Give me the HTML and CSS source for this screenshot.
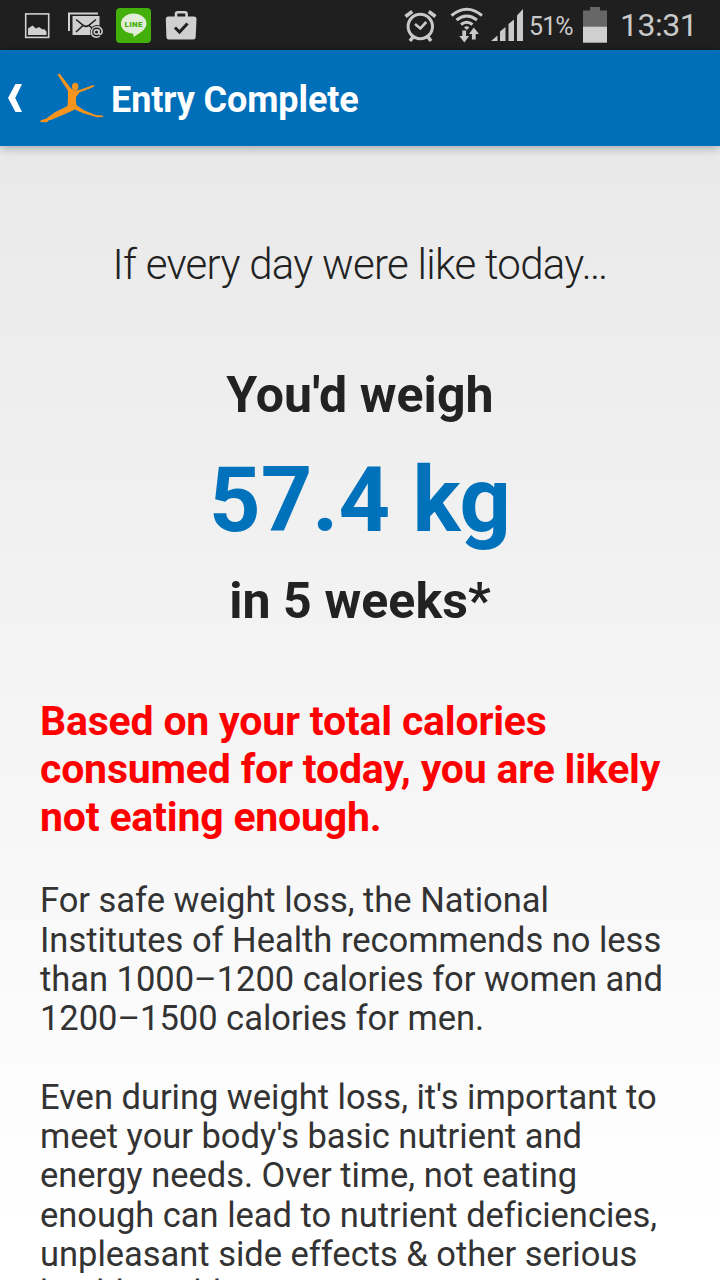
FILE: index.html
```html
<!DOCTYPE html>
<html lang="en">
<head>
  <meta charset="UTF-8" />
  <meta name="viewport" content="width=device-width, initial-scale=1.0"/>
  <title>Entry Complete</title>
  <link rel="stylesheet" href="styles.css">
</head>
<body>
  <div class="status-bar">
    <svg class="status-icons" width="220" height="50" viewBox="0 0 220 50">
      <!-- picture -->
      <rect x="25.700" y="13.900" width="23" height="23.500" fill="none" stroke="#d0d0d0" stroke-width="1.600"/>
      <path d="M28 35V28.500l4.500-3 3.500 3 3-1.500 3.500 2.500 1.500-.5 2.500 2.500V35z" fill="#d0d0d0"/>
      <!-- mail -->
      <path d="M69 31V13.500H98" fill="none" stroke="#d0d0d0" stroke-width="2"/>
      <path d="M72.500 16H99.500V26L91 28V35H72.500z" fill="#d0d0d0"/>
      <path d="M76 19.500l7.500 6q2.500 1.800 5 0l7.500-6M76 32l7-6.500M89 25.500l3 2.500" fill="none" stroke="#1f1f1f" stroke-width="1.600"/>
      <circle cx="97" cy="32" r="7" fill="#1f1f1f"/>
      <circle cx="96.500" cy="32" r="2.300" fill="none" stroke="#d0d0d0" stroke-width="1.500"/>
      <path d="M99 29.500v3.500c0 2 3.200 1.500 3.200-1.200 0-7-10.800-6.500-10.800.4 0 5 5 6 8.500 4" fill="none" stroke="#d0d0d0" stroke-width="1.500"/>
      <!-- chat -->
      <rect x="116" y="8" width="35" height="35" rx="4" fill="#43af0b"/>
      <path d="M133.500 13.500c7.200 0 13 4.300 13 10.200 0 5-5.500 9-13.300 13.300.5-2 .5-3.200-.7-3.500-6.800-.5-11.500-4.500-11.500-9.800 0-5.900 5.500-10.200 12.500-10.200z" fill="#e1ecd9"/>
      <text class="chat-label" x="124.500" y="27" textLength="18">LINE</text>
      <!-- briefcase -->
      <path d="M176 17v-3q0-1.800 1.800-1.800h7q1.800 0 1.800 1.800v3" fill="none" stroke="#d0d0d0" stroke-width="2.600"/>
      <path d="M168 16.500h26q2.500 0 2.500 2.500l-.8 18q-.1 2.500-2.500 2.500h-24.400q-2.300 0-2.400-2.500L165.800 19q0-2.500 2.200-2.500z" fill="#d0d0d0"/>
      <path d="M175 27.500l4.500 4.500 8-8.500" fill="none" stroke="#1f1f1f" stroke-width="3"/>
    </svg>
    <div class="status-right">
      <svg class="signal-icons" width="126" height="50" viewBox="400 0 126 50">
        <!-- alarm -->
        <circle cx="420.300" cy="26.500" r="12.200" fill="none" stroke="#c9c9c9" stroke-width="3"/>
        <path d="M405.500 16.500l6.800-5M435.500 16.500l-6.800-5M413 37l-3 4M428 37l3 4" fill="none" stroke="#c9c9c9" stroke-width="3.600"/>
        <path d="M415 24l5.300 4.500 6-6.500" fill="none" stroke="#c9c9c9" stroke-width="2.600"/>
        <!-- wifi -->
        <g fill="none" stroke="#c9c9c9" stroke-width="3">
          <path d="M451.500 15.500q15.300-12.500 30.500 0"/>
          <path d="M456.500 20q10.300-8 20.500 0"/>
          <path d="M461 24.500q5.800-4.500 11.500 0"/>
        </g>
        <path d="M464 27.300q2.700-2.200 5.400 0l-2.700 2.600z" fill="#c9c9c9"/>
        <path d="M462.300 30.500h3.800v5.500h3.100l-4.900 6.500-5-6.500h3zM471.900 39.500h3.800V34h3.300l-5.200-6.500-4.800 6.500h2.900z" fill="#c9c9c9"/>
        <!-- signal -->
        <path d="M491 41l6.500-5.500V41zM500 41V31.500l5.500-4.500v14zM508.500 41V24l5.500-4.500V41zM517 41V15.500l6-6.500v32z" fill="#c9c9c9"/>
      </svg>
      <span class="percent">51%</span>
      <svg class="battery" width="24" height="50" viewBox="0 0 24 50">
        <path d="M0 10.500H7V7h10v3.500h7V27H0z" fill="#666"/>
        <rect y="26.700" width="24" height="16" fill="#cfcfcf"/>
      </svg>
      <span class="clock">13:31</span>
    </div>
  </div>

  <div class="action-bar">
    <svg class="logo" width="112" height="96" viewBox="0 0 112 96">
      <path d="M15.500 34H22L15.200 48 22 62H15.500L8 48z" fill="#fff"/>
      <g fill="#f7941d">
        <ellipse cx="75.200" cy="36.500" rx="3.200" ry="3.700"/>
        <path d="M57.500 24.500l2.200-.8L71 38.500l4 2 5-.7 13.500-4.800.8 1.500-5.500 2.500-9 3.200-3.500 4.300c-.9 3.500-.2 6 .5 9l7.200 4.800 11.500 4.700 7 .5 1 1.500-6.500.3-14.500-4.300L75 59.500 65 64l-13 5.500-4 1.200-.7 1.600L40 72l1-1.700 5.500-1.800 8-6L67.500 56l.5-10-.2-5.500-5-7.500z"/>
      </g>
    </svg>
    <h1>Entry Complete</h1>
  </div>

  <div class="content">
    <p class="intro">If every day were like today…</p>
    <div class="projection">
      <p class="heading">You'd weigh</p>
      <p class="weight">57.4 kg</p>
      <p class="heading weeks">in 5 weeks*</p>
    </div>
    <p class="warning">Based on your total calories<br>consumed for today, you are likely<br>not eating enough.</p>
    <p class="advice">For safe weight loss, the National<br>Institutes of Health recommends no less<br>than 1000–1200 calories for women and<br>1200–1500 calories for men.</p>
    <p class="advice">Even during weight loss, it's important to<br>meet your body's basic nutrient and<br>energy needs. Over time, not eating<br>enough can lead to nutrient deficiencies,<br>unpleasant side effects &amp; other serious<br>health problems.</p>
  </div>
</body>
</html>
```
FILE: styles.css
```css
* {
  box-sizing: border-box;
}

body {
  margin: 0;
  height: 1280px;
  overflow: hidden;
  font-family: Roboto, sans-serif;
  color: #333;
  background: linear-gradient(#e9e9e9 146px, #fff 1220px);
}

h1,
p {
  margin: 0;
}

svg {
  display: block;
  flex: none;
}

.status-bar {
  height: 50px;
  display: flex;
  justify-content: space-between;
  background: #1f1f1f;
  color: #c9c9c9;
}

.status-right {
  display: flex;
  width: 320px;
  line-height: 51px;
  white-space: nowrap;
}

.chat-label {
  font-size: 8px;
  font-weight: 900;
  fill: #43af0b;
}

.percent {
  width: 54px;
  padding-left: 3px;
  font-size: 25px;
  line-height: 53px;
  letter-spacing: -0.9px;
}

.battery {
  margin-left: 3px;
}

.clock {
  margin-left: 13px;
  font-size: 32px;
  letter-spacing: -0.5px;
}

.action-bar {
  height: 96px;
  display: flex;
  align-items: center;
  background: #006fb9;
  color: #fff;
  box-shadow: 0 2px 9px rgba(0, 0, 0, 0.3);
}

h1 {
  font-size: 36px;
  line-height: 42px;
  padding-top: 4px;
  letter-spacing: -0.1px;
  margin-left: -1px;
  white-space: nowrap;
}

.content {
  padding: 94px 40px 0;
  white-space: nowrap;
}

.intro {
  font-size: 42px;
  font-weight: 300;
  line-height: 50px;
  letter-spacing: -0.72px;
  text-align: center;
  color: #222;
}

.projection {
  margin: 75px 0 66px;
  text-align: center;
  font-weight: bold;
}

.heading {
  font-size: 50px;
  line-height: 60px;
  letter-spacing: 0.1px;
  color: #222;
}

.weight {
  margin: 23px 0 17px;
  font-size: 90px;
  line-height: 106px;
  color: #0072bc;
}

.warning {
  margin-bottom: 40.3px;
  font-size: 41px;
  font-weight: bold;
  line-height: 48px;
  letter-spacing: -0.2px;
  color: #f00;
}

.advice {
  margin-top: 39.3px;
  font-size: 34.5px;
  line-height: 39.3px;
  letter-spacing: -0.02px;
}
```
